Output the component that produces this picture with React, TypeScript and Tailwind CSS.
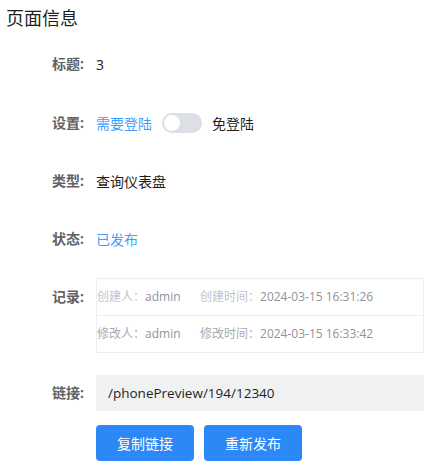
import React from "react";

const font = { fontFamily: '"Open Sans", "Noto Sans CJK SC", sans-serif' };

function Label({ children }: { children: React.ReactNode }) {
  return (
    <div className="w-[44px] shrink-0 text-[14px] font-bold text-[#606266] leading-[36px]">
      {children}
    </div>
  );
}

export default function App() {
  return (
    <div className="w-[431px] h-[470px] bg-white overflow-hidden" style={font}>
      <div className="pl-[6px] pt-[6px] text-[18px] leading-[24px] text-[#1f1f1f]">页面信息</div>
      <div className="pl-[52px] pr-[7px] mt-[16px] flex flex-col">
        <div className="flex items-center h-[36px]">
          <Label>标题:</Label>
          <div className="text-[14px] text-[#1f1f1f]">3</div>
        </div>
        <div className="flex items-center h-[36px] mt-[23px]">
          <Label>设置:</Label>
          <div className="text-[14px] text-[#409eff]">需要登陆</div>
          <div className="ml-[10px] w-[40px] h-[20px] rounded-full bg-[#dcdfe6] p-[2px] flex items-center">
            <div className="w-[16px] h-[16px] rounded-full bg-white"></div>
          </div>
          <div className="ml-[10px] text-[14px] text-[#1f1f1f]">免登陆</div>
        </div>
        <div className="flex items-center h-[36px] mt-[22px]">
          <Label>类型:</Label>
          <div className="text-[14px] text-[#1f1f1f]">查询仪表盘</div>
        </div>
        <div className="flex items-center h-[36px] mt-[22px]">
          <Label>状态:</Label>
          <div className="text-[14px] text-[#409eff]">已发布</div>
        </div>
        <div className="flex items-start mt-[21px]">
          <div className="w-[44px] shrink-0 text-[14px] font-bold text-[#606266] leading-[37px]">记录:</div>
          <div className="flex-1 border border-[#ebeef5] text-[12px]">
            <div className="flex items-center h-[37px] border-b border-[#ebeef5]">
              <div className="w-[103px]">
                <span className="text-[#c0c4cc]">创建人：</span>
                <span className="text-[#909399]">admin</span>
              </div>
              <div>
                <span className="text-[#c0c4cc]">创建时间：</span>
                <span className="text-[#909399]">2024-03-15 16:31:26</span>
              </div>
            </div>
            <div className="flex items-center h-[36px]">
              <div className="w-[103px]">
                <span className="text-[#a8abb2]">修改人：</span>
                <span className="text-[#909399]">admin</span>
              </div>
              <div>
                <span className="text-[#a8abb2]">修改时间：</span>
                <span className="text-[#909399]">2024-03-15 16:33:42</span>
              </div>
            </div>
          </div>
        </div>
        <div className="flex items-center mt-[22px]">
          <Label>链接:</Label>
          <div className="flex-1 h-[36px] bg-[#f0f2f2] pl-[12px] flex items-center text-[13.5px] text-[#1f1f1f]">
            /phonePreview/194/12340
          </div>
        </div>
        <div className="flex pl-[44px] mt-[14px] gap-[10px]">
          <button className="w-[98px] h-[36px] rounded-[4px] bg-[#2d88f7] text-white text-[14px]">复制链接</button>
          <button className="w-[98px] h-[36px] rounded-[4px] bg-[#2d88f7] text-white text-[14px]">重新发布</button>
        </div>
      </div>
    </div>
  );
}
